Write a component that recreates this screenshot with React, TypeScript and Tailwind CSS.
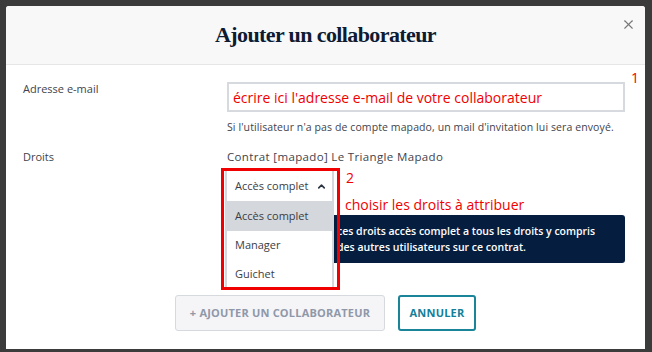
import { ChevronUp, X } from 'lucide-react';

const ui = { fontFamily: '"Open Sans", Lato, sans-serif' };
const note = { fontFamily: '"Open Sans", "Noto Sans", sans-serif' };

function DroitsSelect() {
    return (
        <div className="absolute left-[-2px] top-0 w-[109px] h-[117px] bg-white border-x-2 border-[#d4d7db]">
            <div className="h-[30px] flex items-center pl-[8px] gap-[8px] text-[11px] text-[#3a3d45]">
                <span>Accès complet</span>
                <ChevronUp size={11} strokeWidth={3.5} className="text-[#2c3340]" />
            </div>
            <div className="h-[30px] flex items-center pl-[8px] bg-[#d4d7db] text-[11px] text-[#3a3d45]">
                Accès complet
            </div>
            <div className="h-[29px] flex items-center pl-[8px] text-[11px] text-[#3a3d45]">Manager</div>
            <div className="h-[29px] flex items-center pl-[8px] text-[11px] text-[#3a3d45]">Guichet</div>
        </div>
    );
}

export default function App() {
    return (
        <div className="w-[652px] h-[352px] bg-[#3b3b3b] pt-[6px] pl-[6px] overflow-hidden" style={ui}>
            <div className="relative w-[639px] h-[343px] bg-white rounded-t-[3px]">
                <div className="relative h-[59px] bg-[#f8f8f8] border-b border-[#e6e6e6] rounded-t-[3px] flex items-center justify-center">
                    <h1
                        className="text-[22px] font-bold text-[#0d1b33] tracking-[-0.6px] pb-[2px]"
                        style={{ fontFamily: '"Liberation Serif", "DejaVu Serif", serif' }}
                    >
                        Ajouter un collaborateur
                    </h1>
                    <button className="absolute right-[9px] top-[11px] text-[#777777]">
                        <X size={15} strokeWidth={1.8} />
                    </button>
                </div>

                <div className="grid grid-cols-[204px_398px] pl-[17px] pt-[17px]">
                    <label className="text-[11px] leading-[14px] text-[#3f434b]">Adresse e-mail</label>
                    <div className="relative">
                        <div className="h-[30px] border-2 border-[#d6dade] flex items-center pl-[4px]">
                            <span className="text-[14px] text-[#f00000]" style={note}>
                                écrire ici l'adresse e-mail de votre collaborateur
                            </span>
                        </div>
                        <span className="absolute right-[-14px] top-[-15px] text-[14px] text-[#f00000]" style={note}>1</span>
                        <p className="mt-[8px] text-[10.5px] tracking-[0.1px] leading-[14px] text-[#3f434b]">
                            Si l'utilisateur n'a pas de compte mapado, un mail d'invitation lui sera envoyé.
                        </p>
                    </div>

                    <label className="mt-[16px] text-[11px] leading-[14px] text-[#3f434b]">Droits</label>
                    <div className="mt-[16px]">
                        <p className="text-[11.5px] tracking-[0.35px] leading-[14px] text-[#3f434b]">Contrat [mapado] Le Triangle Mapado</p>
                        <div className="relative mt-[7px]">
                            <div className="h-[30px]" />
                            <div className="mt-[14px] h-[48px] bg-[#051d3f] rounded-[3px] pl-[110px] pt-[8px] text-[10.5px] leading-[16px] font-semibold text-white">
                                ces droits accès complet a tous les droits y compris
                                <br />
                                des autres utilisateurs sur ce contrat.
                            </div>
                            <DroitsSelect />
                            <div className="absolute left-[-6px] top-[-3px] w-[119px] h-[122px] border-[3px] border-[#f00000]" />
                            <span className="absolute left-[119px] top-[-4px] text-[14px] text-[#f00000]" style={note}>2</span>
                            <span className="absolute left-[118px] top-[23px] text-[14px] text-[#f00000]" style={note}>
                                choisir les droits à attribuer
                            </span>
                        </div>
                    </div>
                </div>

                <div className="flex justify-center gap-[13px] mt-[32px]">
                    <button className="h-[36px] w-[210px] bg-[#f5f4f7] border border-[#d6d9de] rounded-[3px] text-[11px] font-bold tracking-[0.2px] text-[#8f98a9]">
                        + AJOUTER UN COLLABORATEUR
                    </button>
                    <button className="h-[36px] w-[78px] bg-white border-2 border-[#1a8499] rounded-[3px] text-[11px] font-bold tracking-[0.2px] text-[#13809a]">
                        ANNULER
                    </button>
                </div>
            </div>
        </div>
    );
}
